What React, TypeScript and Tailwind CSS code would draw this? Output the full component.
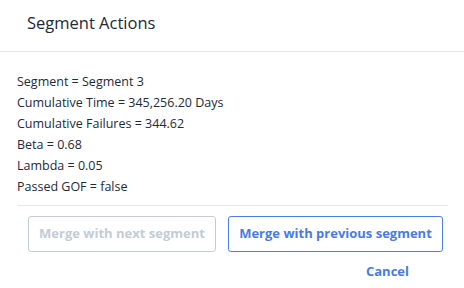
import React from "react";

export default function App() {
  const lines = [
    "Segment = Segment 3",
    "Cumulative Time = 345,256.20 Days",
    "Cumulative Failures = 344.62",
    "Beta = 0.68",
    "Lambda = 0.05",
    "Passed GOF = false",
  ];
  return (
    <div
      className="w-[464px] h-[288px] bg-white overflow-hidden flex flex-col"
      style={{ fontFamily: '"Open Sans", "Noto Sans", sans-serif' }}
    >
      <div className="h-[52px] border-b border-[#e6e6e6] flex items-center pl-[27px] pb-[4px]">
        <h1 className="text-[16.5px] text-[#1e2a38] leading-none">Segment Actions</h1>
      </div>
      <div className="pt-[19px] px-[17px] flex flex-col text-[12.5px] text-[#1e2a38]">
        {lines.map((l) => (
          <div key={l} className="h-[21px] leading-[21px]">{l}</div>
        ))}
      </div>
      <div className="ml-[17px] mr-[16px] mt-[8px] border-t border-[#e8e8e8]" />
      <div className="flex gap-[12px] pl-[28px] mt-[10px]">
        <button className="w-[188px] h-[36px] rounded-[3px] border border-[#c5ced6] text-[#c3ccd4] text-[13px] font-bold">
          Merge with next segment
        </button>
        <button className="w-[215px] h-[36px] rounded-[3px] border border-[#4a7fe3] text-[#4a7be2] text-[13px] font-bold">
          Merge with previous segment
        </button>
      </div>
      <div className="flex justify-end pr-[55px] mt-[9px]">
        <button className="text-[13px] font-bold text-[#4a7be2] leading-[20px]">Cancel</button>
      </div>
    </div>
  );
}
